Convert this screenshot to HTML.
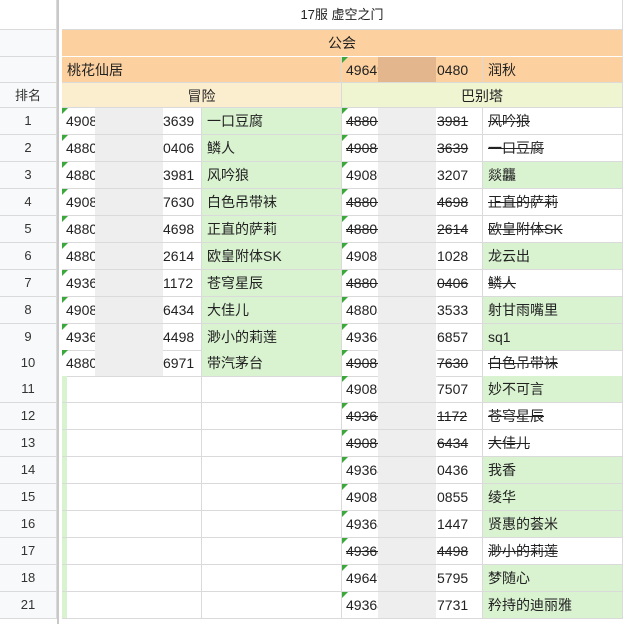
<!DOCTYPE html>
<html><head><meta charset="utf-8"><style>
body{margin:0;width:625px;height:624px;overflow:hidden;background:#fff;font-family:"Liberation Sans","Noto Sans CJK SC",sans-serif;font-size:14px;color:#222;position:relative}
.r{position:absolute;left:0;width:625px;height:27px}
.c{position:absolute;top:0;height:100%;box-sizing:border-box;border-right:1px solid #dadada;border-bottom:1px solid #dadada;line-height:26px;white-space:nowrap;overflow:hidden}
.h{left:0;width:57px;text-align:center;background:#f8f9fa;color:#333;font-size:13px}
.b{left:62px;width:140px}.c2{left:202px;width:140px;padding-left:5px}
.d{left:342px;width:141px}.e{left:483px;width:140px;padding-left:5px}
.g{background:#d9f2d0}.s,.s span{text-decoration:line-through}
.l{position:absolute;left:4px;top:0}.n{position:absolute;top:0}
.bl{position:absolute;top:0;height:100%;background:#eeeeee}
.t{position:absolute;left:0;top:0;width:0;height:0;border-top:6px solid #3aa83a;border-right:6px solid transparent}
.strip{position:absolute;left:0;top:0;width:5px;height:100%;background:#d9f2d0}
.sep{position:absolute;left:57px;top:0;width:2px;height:624px;background:#c8c8c8}
.sep2{position:absolute;left:59px;top:0;width:3px;height:624px;background:#fff}
</style></head><body>
<div class="r" style="top:0;height:30px"><div class="c h" style="background:#fff"></div><div class="c" style="left:62px;width:561px;text-align:center;line-height:30px;font-size:13px">17服 虚空之门</div></div>
<div class="r" style="top:30px"><div class="c h"></div><div class="c" style="left:62px;width:561px;text-align:center;background:#fcd09f;border-bottom-color:#fff">公会</div></div>
<div class="r" style="top:57px;height:26px"><div class="c h"></div><div class="c" style="left:62px;width:280px;background:#fcd09f;padding-left:5px">桃花仙居</div><div class="c d" style="background:#fcd09f"><span class="l">49649</span><div class="bl" style="left:36px;width:58px;background:#e3b68e"></div><span class="n" style="left:95px">0480</span><div class="t"></div></div><div class="c e" style="background:#fcd09f">润秋</div></div>
<div class="r" style="top:83px;height:25px"><div class="c h">排名</div><div class="c" style="left:62px;width:280px;text-align:center;background:#fbeecf">冒险</div><div class="c" style="left:342px;width:281px;text-align:center;background:#eef5d0">巴别塔</div></div>

<div class="r" style="top:108px"><div class="c h">1</div><div class="c b"><span class="l">4908</span><div class="bl" style="left:33px;width:68px"></div><span class="n" style="left:101px">3639</span><div class="t"></div></div><div class="c c2 g">一口豆腐</div><div class="c d s"><span class="l">48805</span><div class="bl" style="left:36px;width:58px"></div><span class="n" style="left:95px">3981</span><div class="t"></div></div><div class="c e s">风吟狼</div></div>
<div class="r" style="top:135px"><div class="c h">2</div><div class="c b"><span class="l">4880</span><div class="bl" style="left:33px;width:68px"></div><span class="n" style="left:101px">0406</span><div class="t"></div></div><div class="c c2 g">鳞人</div><div class="c d s"><span class="l">49086</span><div class="bl" style="left:36px;width:58px"></div><span class="n" style="left:95px">3639</span><div class="t"></div></div><div class="c e s">一口豆腐</div></div>
<div class="r" style="top:162px"><div class="c h">3</div><div class="c b"><span class="l">4880</span><div class="bl" style="left:33px;width:68px"></div><span class="n" style="left:101px">3981</span><div class="t"></div></div><div class="c c2 g">风吟狼</div><div class="c d"><span class="l">49086</span><div class="bl" style="left:36px;width:58px"></div><span class="n" style="left:95px">3207</span><div class="t"></div></div><div class="c e g">燚龘</div></div>
<div class="r" style="top:189px"><div class="c h">4</div><div class="c b"><span class="l">4908</span><div class="bl" style="left:33px;width:68px"></div><span class="n" style="left:101px">7630</span><div class="t"></div></div><div class="c c2 g">白色吊带袜</div><div class="c d s"><span class="l">48805</span><div class="bl" style="left:36px;width:58px"></div><span class="n" style="left:95px">4698</span><div class="t"></div></div><div class="c e s">正直的萨莉</div></div>
<div class="r" style="top:216px"><div class="c h">5</div><div class="c b"><span class="l">4880</span><div class="bl" style="left:33px;width:68px"></div><span class="n" style="left:101px">4698</span><div class="t"></div></div><div class="c c2 g">正直的萨莉</div><div class="c d s"><span class="l">48805</span><div class="bl" style="left:36px;width:58px"></div><span class="n" style="left:95px">2614</span><div class="t"></div></div><div class="c e s">欧皇附体SK</div></div>
<div class="r" style="top:243px"><div class="c h">6</div><div class="c b"><span class="l">4880</span><div class="bl" style="left:33px;width:68px"></div><span class="n" style="left:101px">2614</span><div class="t"></div></div><div class="c c2 g">欧皇附体SK</div><div class="c d"><span class="l">49086</span><div class="bl" style="left:36px;width:58px"></div><span class="n" style="left:95px">1028</span><div class="t"></div></div><div class="c e g">龙云出</div></div>
<div class="r" style="top:270px"><div class="c h">7</div><div class="c b"><span class="l">4936</span><div class="bl" style="left:33px;width:68px"></div><span class="n" style="left:101px">1172</span><div class="t"></div></div><div class="c c2 g">苍穹星辰</div><div class="c d s"><span class="l">48805</span><div class="bl" style="left:36px;width:58px"></div><span class="n" style="left:95px">0406</span><div class="t"></div></div><div class="c e s">鳞人</div></div>
<div class="r" style="top:297px"><div class="c h">8</div><div class="c b"><span class="l">4908</span><div class="bl" style="left:33px;width:68px"></div><span class="n" style="left:101px">6434</span><div class="t"></div></div><div class="c c2 g">大佳儿</div><div class="c d"><span class="l">48805</span><div class="bl" style="left:36px;width:58px"></div><span class="n" style="left:95px">3533</span><div class="t"></div></div><div class="c e g">射甘雨嘴里</div></div>
<div class="r" style="top:324px"><div class="c h">9</div><div class="c b"><span class="l">4936</span><div class="bl" style="left:33px;width:68px"></div><span class="n" style="left:101px">4498</span><div class="t"></div></div><div class="c c2 g">渺小的莉莲</div><div class="c d"><span class="l">49368</span><div class="bl" style="left:36px;width:58px"></div><span class="n" style="left:95px">6857</span><div class="t"></div></div><div class="c e g">sq1</div></div>
<div class="r" style="top:350px"><div class="c h">10</div><div class="c b"><span class="l">4880</span><div class="bl" style="left:33px;width:68px"></div><span class="n" style="left:101px">6971</span><div class="t"></div></div><div class="c c2 g">带汽茅台</div><div class="c d s"><span class="l">49086</span><div class="bl" style="left:36px;width:58px"></div><span class="n" style="left:95px">7630</span><div class="t"></div></div><div class="c e s">白色吊带袜</div></div>
<div class="r" style="top:376px"><div class="c h">11</div><div class="c b"><div class="strip"></div></div><div class="c c2"></div><div class="c d"><span class="l">49086</span><div class="bl" style="left:36px;width:58px"></div><span class="n" style="left:95px">7507</span><div class="t"></div></div><div class="c e g">妙不可言</div></div>
<div class="r" style="top:403px"><div class="c h">12</div><div class="c b"><div class="strip"></div></div><div class="c c2"></div><div class="c d s"><span class="l">49368</span><div class="bl" style="left:36px;width:58px"></div><span class="n" style="left:95px">1172</span><div class="t"></div></div><div class="c e s">苍穹星辰</div></div>
<div class="r" style="top:430px"><div class="c h">13</div><div class="c b"><div class="strip"></div></div><div class="c c2"></div><div class="c d s"><span class="l">49086</span><div class="bl" style="left:36px;width:58px"></div><span class="n" style="left:95px">6434</span><div class="t"></div></div><div class="c e s">大佳儿</div></div>
<div class="r" style="top:457px"><div class="c h">14</div><div class="c b"><div class="strip"></div></div><div class="c c2"></div><div class="c d"><span class="l">49368</span><div class="bl" style="left:36px;width:58px"></div><span class="n" style="left:95px">0436</span><div class="t"></div></div><div class="c e g">我香</div></div>
<div class="r" style="top:484px"><div class="c h">15</div><div class="c b"><div class="strip"></div></div><div class="c c2"></div><div class="c d"><span class="l">49086</span><div class="bl" style="left:36px;width:58px"></div><span class="n" style="left:95px">0855</span><div class="t"></div></div><div class="c e g">绫华</div></div>
<div class="r" style="top:511px"><div class="c h">16</div><div class="c b"><div class="strip"></div></div><div class="c c2"></div><div class="c d"><span class="l">49368</span><div class="bl" style="left:36px;width:58px"></div><span class="n" style="left:95px">1447</span><div class="t"></div></div><div class="c e g">贤惠的荟米</div></div>
<div class="r" style="top:538px"><div class="c h">17</div><div class="c b"><div class="strip"></div></div><div class="c c2"></div><div class="c d s"><span class="l">49368</span><div class="bl" style="left:36px;width:58px"></div><span class="n" style="left:95px">4498</span><div class="t"></div></div><div class="c e s">渺小的莉莲</div></div>
<div class="r" style="top:565px"><div class="c h">18</div><div class="c b"><div class="strip"></div></div><div class="c c2"></div><div class="c d"><span class="l">49649</span><div class="bl" style="left:36px;width:58px"></div><span class="n" style="left:95px">5795</span><div class="t"></div></div><div class="c e g">梦随心</div></div>
<div class="r" style="top:592px"><div class="c h">21</div><div class="c b"><div class="strip"></div></div><div class="c c2"></div><div class="c d"><span class="l">49368</span><div class="bl" style="left:36px;width:58px"></div><span class="n" style="left:95px">7731</span><div class="t"></div></div><div class="c e g">矜持的迪丽雅</div></div>
<div class="sep"></div><div class="sep2"></div>
</body></html>
